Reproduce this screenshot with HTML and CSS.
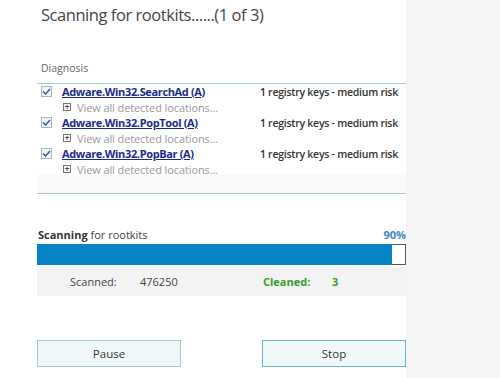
FILE: index.html
```html
<!DOCTYPE html>
<html lang="en">
<head>
    <meta charset="UTF-8">
    <title>Scanning for rootkits</title>
    <link rel="stylesheet" href="styles.css">
</head>
<body>
    <div class="panel">
        <h1 class="title">Scanning for rootkits......(1 of 3)</h1>

        <div class="label">Diagnosis</div>
        <div class="list">
            <div class="item">
                <div class="item-head">
                    <span class="check"><svg width="9" height="7" viewBox="0 0 9 7"><path d="M1 3.5 L3.5 6 L8 1" fill="none" stroke="#2d5b8a" stroke-width="1.4"/></svg></span>
                    <a class="threat" href="#">Adware.Win32.SearchAd (A)</a>
                    <span class="risk">1 registry keys - medium risk</span>
                </div>
                <div class="item-sub"><span class="plus">+</span>View all detected locations...</div>
            </div>
            <div class="item">
                <div class="item-head">
                    <span class="check"><svg width="9" height="7" viewBox="0 0 9 7"><path d="M1 3.5 L3.5 6 L8 1" fill="none" stroke="#2d5b8a" stroke-width="1.4"/></svg></span>
                    <a class="threat" href="#">Adware.Win32.PopTool (A)</a>
                    <span class="risk">1 registry keys - medium risk</span>
                </div>
                <div class="item-sub"><span class="plus">+</span>View all detected locations...</div>
            </div>
            <div class="item">
                <div class="item-head">
                    <span class="check"><svg width="9" height="7" viewBox="0 0 9 7"><path d="M1 3.5 L3.5 6 L8 1" fill="none" stroke="#2d5b8a" stroke-width="1.4"/></svg></span>
                    <a class="threat" href="#">Adware.Win32.PopBar (A)</a>
                    <span class="risk">1 registry keys - medium risk</span>
                </div>
                <div class="item-sub"><span class="plus">+</span>View all detected locations...</div>
            </div>
        </div>

        <div class="progress-head">
            <span><b>Scanning</b> for rootkits</span>
            <span class="percent">90%</span>
        </div>
        <div class="bar">
            <div class="bar-fill"></div>
            <div class="bar-rest"></div>
        </div>
        <div class="stats">
            <span class="stat-name">Scanned:</span>
            <span class="stat-value">476250</span>
            <span class="stat-name green">Cleaned:</span>
            <span class="stat-value green">3</span>
        </div>

        <div class="buttons">
            <button class="btn">Pause</button>
            <button class="btn btn-main">Stop</button>
        </div>
    </div>
</body>
</html>
```

FILE: styles.css
```css
body { margin: 0; background: #f5f5f5; font-family: "Open Sans", "Noto Sans", sans-serif; color: #333; }
.panel { width: 369px; height: 378px; padding-left: 37px; background: #fff; }

.title { margin: 0; padding: 3px 0 0 4px; height: 59px; box-sizing: border-box; font-size: 16.5px; font-weight: 400; color: #454545; letter-spacing: -0.45px; }

.label { padding-left: 4px; height: 24px; font-size: 10.5px; color: #666; line-height: 18px; }
.list { height: 109px; border-top: 1px solid #a8cbd2; border-bottom: 1px solid #a8cbd2; background: linear-gradient(#fff 90px, #fafafa 91px); }
.item { height: 31px; }
.item-head { display: flex; align-items: center; height: 15px; padding-left: 4px; }
.check { width: 11px; height: 11px; box-sizing: border-box; border: 1px solid #a9b6c4; background: #f1f4f8; display: flex; align-items: center; justify-content: center; margin-right: 10px; }
.threat { font-size: 11px; font-weight: 700; color: #1b2a8a; text-decoration: underline; letter-spacing: -0.35px; }
.risk { margin-left: auto; padding-right: 8px; font-size: 10.5px; font-weight: 600; color: #333; letter-spacing: -0.25px; }
.item-sub { display: flex; align-items: center; height: 16px; padding-left: 26px; font-size: 11px; color: #9a9a9a; letter-spacing: -0.1px; }
.plus { width: 8px; height: 8px; box-sizing: border-box; border: 1px solid #777; font-size: 8px; line-height: 5px; font-weight: 700; color: #444; text-align: center; margin-right: 6px; letter-spacing: 0; }

.progress-head { display: flex; justify-content: space-between; align-items: flex-end; margin-top: 31px; height: 17px; padding-left: 1px; font-size: 11px; color: #444; }
.progress-head b { font-weight: 700; color: #333; }
.percent { font-weight: 700; color: #3b89b8; }
.bar { display: flex; height: 21px; margin-top: 2px; }
.bar-fill { flex: 1; background: #0784c5; }
.bar-rest { width: 13px; background: #fff; border: 1px solid #555; border-left: none; }
.stats { display: flex; align-items: center; height: 29px; margin-top: 2px; background: #f3f3f3; font-size: 11px; color: #444; }
.stat-name { width: 70px; margin-left: 33px; }
.stat-value { width: 123px; }
.stat-value.green { width: auto; }
.stat-name.green { margin-left: 0; width: 69px; }
.green { color: #3b9a2e; font-weight: 700; }

.buttons { display: flex; justify-content: space-between; margin-top: 44px; }
.btn { width: 144px; height: 27px; background: #f1f8fa; border: 1px solid #a7c9d1; font-family: "Open Sans", sans-serif; font-size: 11.5px; color: #333; padding: 0; }
.btn-main { border: 1px solid #6fb6c3; }
```
